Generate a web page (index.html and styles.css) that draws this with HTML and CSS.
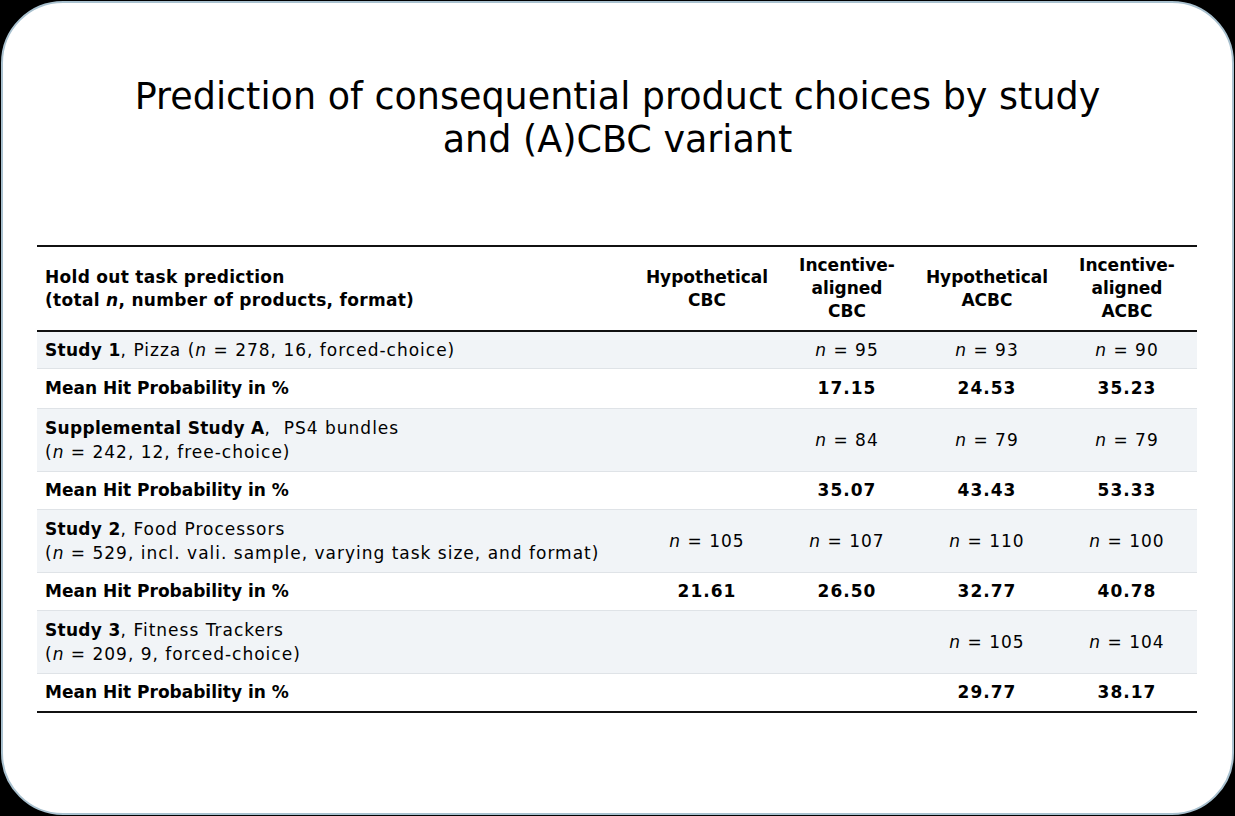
FILE: index.html
```html
<!DOCTYPE html>
<html lang="en">
<head>
<meta charset="utf-8">
<title>Prediction of consequential product choices</title>
<link rel="stylesheet" href="styles.css">
</head>
<body>
<div class="card">
  <h1 class="title">Prediction of consequential product choices by study<br>and (A)CBC variant</h1>
  <table class="results">
    <colgroup>
      <col class="c-label">
      <col class="c-val"><col class="c-val"><col class="c-val"><col class="c-val">
    </colgroup>
    <thead>
      <tr>
        <th class="label">Hold out task prediction<br>(total <i>n</i>, number of products, format)</th>
        <th>Hypothetical<br>CBC</th>
        <th>Incentive-<br>aligned<br>CBC</th>
        <th>Hypothetical<br>ACBC</th>
        <th>Incentive-<br>aligned<br>ACBC</th>
      </tr>
    </thead>
    <tbody>
      <tr class="study single">
        <td class="label"><b>Study 1</b>, Pizza (<i>n</i> = 278, 16, forced-choice)</td>
        <td></td><td><i>n</i> = 95</td><td><i>n</i> = 93</td><td><i>n</i> = 90</td>
      </tr>
      <tr class="mean first">
        <td class="label">Mean Hit Probability in %</td>
        <td></td><td>17.15</td><td>24.53</td><td>35.23</td>
      </tr>
      <tr class="study">
        <td class="label"><b>Supplemental Study A</b>,&nbsp; PS4 bundles<br>(<i>n</i> = 242, 12, free-choice)</td>
        <td></td><td><i>n</i> = 84</td><td><i>n</i> = 79</td><td><i>n</i> = 79</td>
      </tr>
      <tr class="mean">
        <td class="label">Mean Hit Probability in %</td>
        <td></td><td>35.07</td><td>43.43</td><td>53.33</td>
      </tr>
      <tr class="study">
        <td class="label"><b>Study 2</b>, Food Processors<br>(<i>n</i> = 529, incl. vali. sample, varying task size, and format)</td>
        <td><i>n</i> = 105</td><td><i>n</i> = 107</td><td><i>n</i> = 110</td><td><i>n</i> = 100</td>
      </tr>
      <tr class="mean">
        <td class="label">Mean Hit Probability in %</td>
        <td>21.61</td><td>26.50</td><td>32.77</td><td>40.78</td>
      </tr>
      <tr class="study">
        <td class="label"><b>Study 3</b>, Fitness Trackers<br>(<i>n</i> = 209, 9, forced-choice)</td>
        <td></td><td></td><td><i>n</i> = 105</td><td><i>n</i> = 104</td>
      </tr>
      <tr class="mean">
        <td class="label">Mean Hit Probability in %</td>
        <td></td><td></td><td>29.77</td><td>38.17</td>
      </tr>
    </tbody>
  </table>
</div>
</body>
</html>
```

FILE: styles.css
```css
html, body {
  margin: 0;
  padding: 0;
  background: #000;
}

body {
  width: 1235px;
  height: 816px;
  font-family: "DejaVu Sans", "Liberation Sans", sans-serif;
  color: #000;
}

.card {
  box-sizing: border-box;
  margin: 1px;
  width: 1233px;
  height: 814px;
  background: #fff;
  border: 2px solid #a9c1cf;
  border-radius: 62px;
  padding: 72px 34px 0 34px;
}

.title {
  margin: 0 0 84px 0;
  font-weight: normal;
  font-size: 36.5px;
  line-height: 43px;
  text-align: center;
  color: #000;
}

.results {
  width: 1160px;
  border-collapse: collapse;
  table-layout: fixed;
  border-top: 2px solid #111;
  border-bottom: 2px solid #111;
  font-size: 17px;
}

.c-label { width: 600px; }
.c-val { width: 140px; }

.results th {
  font-weight: bold;
  text-align: center;
  vertical-align: middle;
  line-height: 23px;
  padding: 7px 2px 7px 2px;
  height: 69px;
  border-bottom: 2px solid #111;
}

.results th.label {
  letter-spacing: 0.3px;
}

.results th.label,
.results td.label {
  text-align: left;
  padding-left: 8px;
}

.results td {
  text-align: center;
  vertical-align: middle;
  line-height: 24px;
  padding: 6px 2px 7px 2px;
  letter-spacing: 1px;
}

.results td b {
  letter-spacing: 0.3px;
}

.results tbody tr {
  border-top: 1px solid #dfe3e7;
}

.results tr.study td {
  background: #f1f4f7;
  padding-top: 7px;
}

.results tr.study.single td {
  padding-top: 6px;
  padding-bottom: 6px;
}

.results tr.mean.first td {
  padding-top: 7px;
  padding-bottom: 8px;
}

.results tr.mean td {
  font-weight: bold;
}

.results tr.mean td.label {
  letter-spacing: 0;
}

.results i {
  font-style: italic;
}
```
